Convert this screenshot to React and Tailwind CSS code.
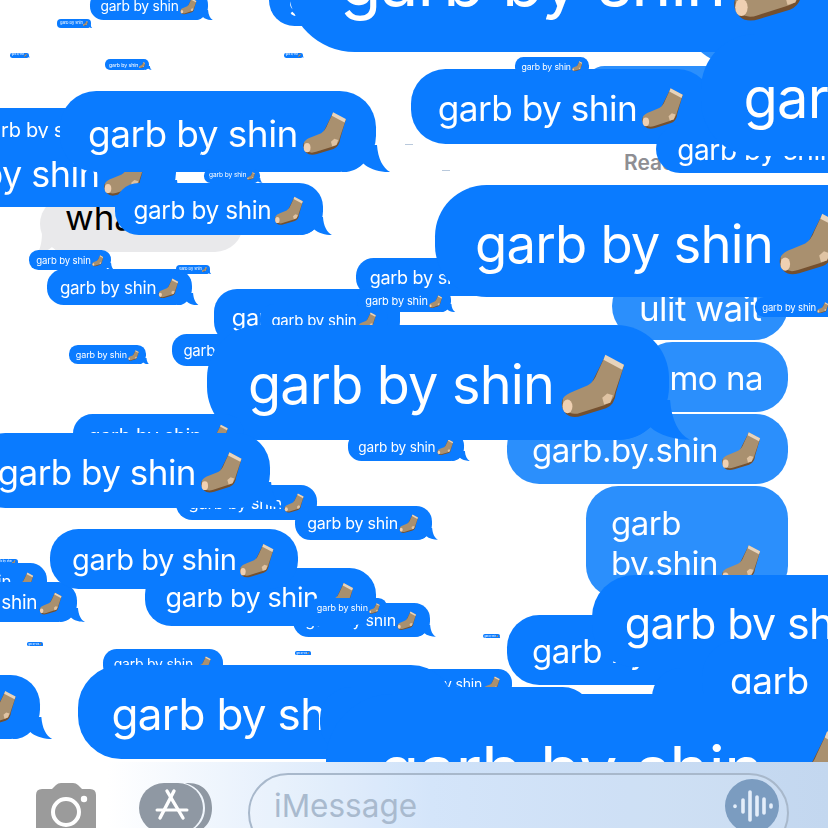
// collage of pasted imessage bubbles, listed back to front
const BLUE = "#0a7bff";
const LIGHT = "#2b8ffc";

function Sock({ size }) {
    return (
        <svg viewBox="-2 -2 104 106" width={size} height={size} className="shrink-0">
            <path d="M70 2 L100 18 L87 62 Q85 82 71 87 L32 99 Q16 104 7 96 Q-3 86 1 73 L40 62 Z" fill="#74502f" />
            <path d="M70 2 L100 18 L86 60 Q83 78 68 82 L30 94 Q16 99 8 91 Q-1 82 2 71 Q6 64 20 59 L42 50 Q52 44 57 30 Z" fill="#a9906f" />
            <path d="M70 1 L100 17 L97 25 L67 9 Z" fill="#e7d4bd" />
            <ellipse cx="9" cy="84" rx="8" ry="11" fill="#efd0b2" />
            <path d="M65 70 L73 63 L82 66 L78 78 L68 81 Z" fill="#dfc3a3" />
        </svg>
    );
}

function Bubble({ x, y, fs, lines = ["garb by shin"], sock = true, light = false, h, tail = true, flow = false, minW, end = false }) {
    const height = h || fs * 2.13;
    return (
        <div
            className={`${flow ? "relative" : "absolute"} flex items-center ${end ? "justify-end" : "justify-start"} whitespace-nowrap text-white`}
            style={{
                left: x,
                top: y,
                height,
                minWidth: minW,
                fontSize: fs,
                lineHeight: 1.2,
                letterSpacing: "-0.015em",
                paddingLeft: fs * 0.76,
                paddingRight: sock ? fs * 0.8 : fs * 0.76,
                paddingTop: fs * 0.12,
                borderRadius: fs * 0.98,
                backgroundColor: light ? LIGHT : BLUE,
            }}
        >
            <div style={{ filter: `blur(${fs * 0.007}px)` }}>
                {lines.map((line, i) => (
                    <div key={i} className="flex items-center">
                        <span>{line}</span>
                        {sock && i === lines.length - 1 && (
                            <span className="flex" style={{ marginLeft: fs * 0.1 }}>
                                <Sock size={fs * 1.22} />
                            </span>
                        )}
                    </div>
                ))}
            </div>
            {tail && (
                <svg
                    viewBox="0 0 51 28"
                    className="absolute bottom-0"
                    style={{ right: fs * -0.42, width: fs * 1.34, height: fs * 0.74 }}
                >
                    <path d="M36 0 C37 14 42 24 50 28 C40 28 28 25 22 19 C17 24 10 28 0 28 L0 0 Z" fill={light ? LIGHT : BLUE} />
                </svg>
            )}
        </div>
    );
}

// x, y, font size
const bubbles = [
    { x: 269, y: -29, fs: 26 },
    { x: 288, y: -97, fs: 68, h: 149, tail: false },
    { x: 90, y: -9, fs: 13.8 },
    { x: 57, y: 19, fs: 4 },
    { x: 10, y: 53, fs: 2.2 },
    { x: 284, y: 53, fs: 2.2 },
    { x: 105, y: 59, fs: 5.2 },
    { x: -37, y: 108, fs: 20 },
    { x: -132, y: 138, fs: 36, h: 69 },
    { x: 60, y: 91, fs: 37, h: 81 },
    { x: 204, y: 169, fs: 6.6 },
    { x: 115, y: 183, fs: 24.3 },
    { x: 29, y: 250, fs: 9.6 },
    { x: 176, y: 265, fs: 4 },
    { x: 47, y: 269, fs: 17 },
    { x: 214, y: 289, fs: 23.5, h: 56, sock: false, tail: false, minW: 186 },
    { x: 260, y: 304, fs: 15 },
    { x: 356, y: 258, fs: 18 },
    { x: 357, y: 289, fs: 11 },
    { x: 172, y: 334, fs: 15 },
    { x: 69, y: 345, fs: 9 },
    { x: 348, y: 432, fs: 13.6 },
    { x: 207, y: 325, fs: 54 },
    { x: 73, y: 414, fs: 20 },
    { x: 176, y: 485, fs: 16.5 },
    { x: -29, y: 433, fs: 35 },
    { x: 295, y: 506, fs: 16 },
    { x: -98, y: 563, fs: 17 },
    { x: -6, y: 559, fs: 2.8 },
    { x: -85, y: 582, fs: 19 },
    { x: 293, y: 603, fs: 16 },
    { x: 145, y: 568, fs: 27, tail: false },
    { x: 50, y: 529, fs: 29, h: 60, tail: false },
    { x: 310, y: 598, fs: 9 },
    { x: 27, y: 642, fs: 1.9 },
    { x: 295, y: 651, fs: 1.9 },
    { x: 483, y: 634, fs: 2 },
    { x: -216, y: 675, fs: 30 },
    { x: 103, y: 649, fs: 14 },
    { x: 392, y: 669, fs: 14 },
    { x: 78, y: 665, fs: 44 },
    { x: 507, y: 615, fs: 33 },
    { x: 592, y: 575, fs: 43 },
    { x: 652, y: 668, fs: 30, lines: ["garb"], sock: false, tail: false, minW: 176 },
    { x: 702, y: 640, fs: 37, lines: ["garb"], sock: false, tail: false, minW: 140 },
    { x: 320, y: 687, fs: 32, tail: false },
    { x: 326, y: 694, fs: 68 },
    { x: 411, y: 69, fs: 35.2, tail: false },
    { x: 656, y: 125, fs: 28, h: 48 },
    { x: 515, y: 57, fs: 8.7, tail: false },
    { x: 701, y: 34, fs: 56, h: 122 },
    { x: 435, y: 185, fs: 52.6 },
    { x: 755, y: 297, fs: 9.5 },
];

function Collage() {
    return (
        <div className="relative h-[762px] overflow-hidden">
            {/* chat underneath */}
            <Bubble x={683} y={-40} fs={54} sock={false} lines={["garb by"]} light tail={false} h={105} />
            <Bubble x={585} y={66} fs={20} sock={false} lines={["garb by shin"]} light tail={false} />
            <div className="absolute right-[40px] top-[272px] flex flex-col items-end gap-[2px]">
                <Bubble flow fs={35} h={68} sock={false} lines={["ulit wait"]} light tail={false} minW={174} />
                <Bubble flow fs={33} h={70} sock={false} lines={["mo na"]} light tail={false} minW={148} end />
                <Bubble flow fs={33} h={70} lines={["garb.by.shin"]} light tail={false} />
                <Bubble flow fs={33} h={112} lines={["garb", "by.shin"]} light tail={false} />
            </div>
            <span className="absolute left-[624px] top-[147px] text-[21px] font-semibold text-[#8e8e93]">Read</span>
            <div className="absolute left-[40px] top-[196px] h-[56px] w-[203px] rounded-[28px] bg-[#e9e9eb] pl-[25px] text-[35px] leading-[42px] text-black">
                what
                <svg viewBox="0 0 20 20" className="absolute bottom-0 left-[-2px] h-[20px] w-[20px]">
                    <path d="M4 0 C4 8 3 15 0 20 C6 20 11 18 14 15 L20 20 V0 Z" fill="#e9e9eb" />
                </svg>
            </div>
            <div className="absolute left-[405px] top-[144px] h-[1px] w-[8px] bg-[#b9c9dc]" />
            <div className="absolute left-[442px] top-[170px] h-[1px] w-[8px] bg-[#b9c9dc]" />

            {bubbles.map((b, i) => (
                <Bubble key={i} {...b} />
            ))}
        </div>
    );
}

function Toolbar() {
    return (
        <div className="relative flex h-[66px] items-start overflow-hidden bg-gradient-to-r from-white from-[13%] via-[#cfe2f9] via-[52%] to-[#c3d7ef]">
            <svg viewBox="0 0 60 52" className="ml-[36px] mt-[21px] h-[52px] w-[60px] shrink-0">
                <path d="M6 6 H16 L20 2 Q22 0 25 0 H37 Q40 0 42 2 L46 6 H54 Q60 6 60 12 V46 Q60 52 54 52 H6 Q0 52 0 46 V12 Q0 6 6 6 Z" fill="#9b9b9b" />
                <circle cx="30" cy="29" r="13" fill="none" stroke="#fff" strokeWidth="4" />
                <circle cx="48" cy="16" r="3.2" fill="#fff" />
            </svg>
            <svg viewBox="0 0 74 50" className="ml-[43px] mt-[21px] h-[50px] w-[74px] shrink-0">
                <path d="M46 0 H49 C66 0 73 12 73 25 C73 38 66 50 49 50 H46 C60 46 66 36 66 25 C66 14 60 4 46 0 Z" fill="#8f98a3" />
                <rect x="0" y="0" width="64" height="50" rx="25" fill="#8f98a3" />
                <g stroke="#fff" strokeLinecap="round" fill="none">
                    <path d="M35 8 L21 35" strokeWidth="3.4" />
                    <path d="M28 8 L44 35" strokeWidth="3.4" />
                    <path d="M18 27 H48" strokeWidth="3" />
                </g>
            </svg>
            <div className="ml-[35px] mt-[11px] flex h-[80px] w-[541px] shrink-0 items-start justify-between rounded-[40px] border-2 border-[#a8b8cb] bg-white/10 pl-[24px] pr-[8px] pt-[4px]">
                <span className="pt-[7px] text-[31.5px] leading-[40px] text-[#a9bace]">iMessage</span>
                <svg viewBox="0 0 54 54" className="h-[54px] w-[54px]">
                    <circle cx="27" cy="27" r="27" fill="#7b9cc0" />
                    <g stroke="#e4eefa" strokeWidth="3.6" strokeLinecap="round">
                        <path d="M10 27 V27.5" />
                        <path d="M18 21 V33" />
                        <path d="M25 13 V41" />
                        <path d="M32 18 V36" />
                        <path d="M39 20 V34" />
                        <path d="M46 26 V28" />
                    </g>
                </svg>
            </div>
        </div>
    );
}

export default function App() {
    return (
        <div className="h-[828px] w-[828px] overflow-hidden bg-white font-['Inter',sans-serif]">
            <Collage />
            <Toolbar />
        </div>
    );
}
